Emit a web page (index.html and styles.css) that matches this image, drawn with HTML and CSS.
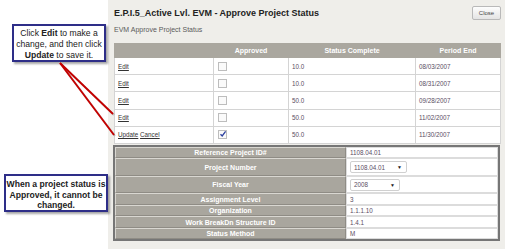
FILE: index.html
```html
<!DOCTYPE html>
<html lang="en">
<head>
    <meta charset="UTF-8">
    <title>E.P.I.5_Active Lvl. EVM - Approve Project Status</title>
    <link rel="stylesheet" href="styles.css">
</head>
<body>
<div class="page">

    <!-- Annotation callouts -->
    <aside class="notes">
        <div class="callout callout-edit">
            Click <b>Edit</b> to make a<br>change, and then click<br><b>Update</b> to save it.
        </div>
        <div class="callout callout-approved">
            When a project status is<br>Approved, it cannot be<br>changed.
        </div>
    </aside>

    <main class="panel">
        <div class="panel-head">
            <h1>E.P.I.5_Active Lvl. EVM - Approve Project Status</h1>
            <button class="close">Close</button>
        </div>
        <p class="subtitle">EVM Approve Project Status</p>

        <table class="status">
            <colgroup>
                <col class="c-action">
                <col class="c-approved">
                <col class="c-complete">
                <col class="c-end">
            </colgroup>
            <thead>
                <tr>
                    <th></th>
                    <th>Approved</th>
                    <th>Status Complete</th>
                    <th>Period End</th>
                </tr>
            </thead>
            <tbody>
                <tr>
                    <td><a href="#">Edit</a></td>
                    <td><span class="check"></span></td>
                    <td>10.0</td>
                    <td>08/03/2007</td>
                </tr>
                <tr>
                    <td><a href="#">Edit</a></td>
                    <td><span class="check"></span></td>
                    <td>10.0</td>
                    <td>08/31/2007</td>
                </tr>
                <tr>
                    <td><a href="#">Edit</a></td>
                    <td><span class="check"></span></td>
                    <td>50.0</td>
                    <td>09/28/2007</td>
                </tr>
                <tr>
                    <td><a href="#">Edit</a></td>
                    <td><span class="check"></span></td>
                    <td>50.0</td>
                    <td>11/02/2007</td>
                </tr>
                <tr>
                    <td><a href="#">Update</a> <a href="#">Cancel</a></td>
                    <td>
                        <span class="check checked">
                            <svg viewBox="0 0 8 8" width="8" height="8"><path d="M1.5 4.2 L3.2 6 L6.6 1.4" fill="none" stroke="#2b3f9e" stroke-width="1.3"/></svg>
                        </span>
                    </td>
                    <td>50.0</td>
                    <td>11/30/2007</td>
                </tr>
            </tbody>
        </table>

        <table class="details">
            <tr class="row-s"><th>Reference Project ID#</th><td>1108.04.01</td></tr>
            <tr class="row-l"><th>Project Number</th><td><span class="select s-project">1108.04.01 <i>&#9660;</i></span></td></tr>
            <tr class="row-l"><th>Fiscal Year</th><td><span class="select s-year">2008 <i>&#9660;</i></span></td></tr>
            <tr class="row-s"><th>Assignment Level</th><td>3</td></tr>
            <tr class="row-s"><th>Organization</th><td>1.1.1.10</td></tr>
            <tr class="row-s"><th>Work BreakDn Structure ID</th><td>1.4.1</td></tr>
            <tr class="row-s"><th>Status Method</th><td>M</td></tr>
        </table>
    </main>

    <!-- Callout pointers, drawn over the table -->
    <svg class="arrows" width="505" height="249" viewBox="0 0 505 249">
        <g stroke="rgba(0,0,0,0.18)" stroke-width="2">
            <line x1="61" y1="64" x2="114" y2="115"/>
            <line x1="61" y1="64" x2="115" y2="136"/>
        </g>
        <g stroke="#c40000" stroke-width="1.8">
            <line x1="60" y1="63" x2="113" y2="114"/>
            <line x1="60" y1="63" x2="114" y2="135"/>
        </g>
    </svg>
</div>
</body>
</html>
```

FILE: styles.css
```css
/* Base */
body {
    margin: 0;
    font-family: "Liberation Sans", Arial, sans-serif;
    background-color: #fff;
    color: #222;
}

.page {
    display: flex;
    height: 249px;
    position: relative;
    overflow: hidden;
}

/* Callouts */
.notes {
    width: 108px;
    flex: none;
    padding-top: 24px;
    box-sizing: border-box;
    position: relative;
    z-index: 2;
}

.callout {
    border: 2px solid #2e2e88;
    background-color: #fff;
    box-shadow: 2px 2px 2px rgba(0, 0, 0, 0.35);
    font-size: 8.6px;
    text-align: center;
    color: #222;
    box-sizing: border-box;
    white-space: nowrap;
}

.callout-edit {
    margin-left: 12px;
    width: 94px;
    height: 38px;
    padding-top: 2px;
    line-height: 11px;
}

.callout-approved {
    margin-left: 4px;
    width: 104px;
    height: 38px;
    margin-top: 112px;
    padding-top: 3px;
    line-height: 10.5px;
    font-weight: bold;
}

.arrows {
    position: absolute;
    left: 0;
    top: 0;
    pointer-events: none;
    z-index: 3;
}

/* Panel */
.panel {
    flex: 1;
    background-color: #efeeea;
    padding: 6px 5px 0 6px;
}

.panel-head {
    display: flex;
    justify-content: space-between;
    align-items: center;
    height: 14px;
}

h1 {
    margin: 0;
    font-size: 9px;
    color: #222;
}

.close {
    width: 29px;
    height: 14px;
    padding: 0;
    border: 1px solid #b9b9b9;
    border-radius: 2px;
    background: linear-gradient(#fdfdfd, #e4e4e4);
    font-family: "Liberation Sans", Arial, sans-serif;
    font-size: 6px;
    color: #444;
}

.subtitle {
    margin: 5px 0 0;
    font-size: 7px;
    line-height: 9px;
    color: #5a5a5a;
}

/* Status table */
table.status {
    margin-top: 9px;
    width: 386px;
    border-collapse: collapse;
    table-layout: fixed;
    background-color: #fff;
    font-size: 6.3px;
}

.c-action { width: 99px; }
.c-approved { width: 75px; }
.c-complete { width: 127px; }
.c-end { width: 85px; }

.status thead tr { height: 14px; }
.status tbody tr { height: 17.2px; }

.status th {
    padding: 0;
    background-color: #aaa79f;
    border: 1px solid #aaa79f;
    color: #fff;
    font-size: 7px;
    font-weight: bold;
}

.status td {
    padding: 0 3px;
    border: 1px solid #d4d4d4;
    color: #5a4d63;
}

.status a {
    color: #333;
}

.check {
    display: inline-block;
    width: 7px;
    height: 7px;
    border: 1px solid #bdbdbd;
    background-color: #fafafa;
    vertical-align: middle;
    margin-left: 1px;
    position: relative;
}

.check svg {
    position: absolute;
    left: 0;
    top: -1px;
}

/* Details table */
table.details {
    width: 387px;
    margin-left: -1px;
    margin-top: 1px;
    border: 2px solid #767676;
    border-collapse: separate;
    border-spacing: 0;
    background-color: #e6e4de;
    font-size: 6.3px;
}

.details th {
    width: 229px;
    padding: 0;
    background-color: #a9a69e;
    border: 1px solid #d9d7d1;
    border-right-color: #8f8c85;
    border-bottom-color: #8f8c85;
    color: #fff;
    font-size: 7px;
    font-weight: bold;
}

.details td {
    padding: 0 3px;
    background-color: #fff;
    border: 1px solid #dcdcdc;
    color: #5a4d63;
}

.details tr.row-s { height: 11.5px; }
.details tr.row-l { height: 17.5px; }

.select {
    display: inline-flex;
    align-items: center;
    justify-content: space-between;
    height: 12px;
    padding: 0 4px 0 3px;
    border: 1px solid #d0d0d0;
    border-radius: 2px;
    background-color: #fff;
    box-sizing: border-box;
    vertical-align: middle;
}

.select i {
    font-style: normal;
    font-size: 5px;
    color: #222;
}

.s-project { width: 57px; }
.s-year { width: 50px; }
```
